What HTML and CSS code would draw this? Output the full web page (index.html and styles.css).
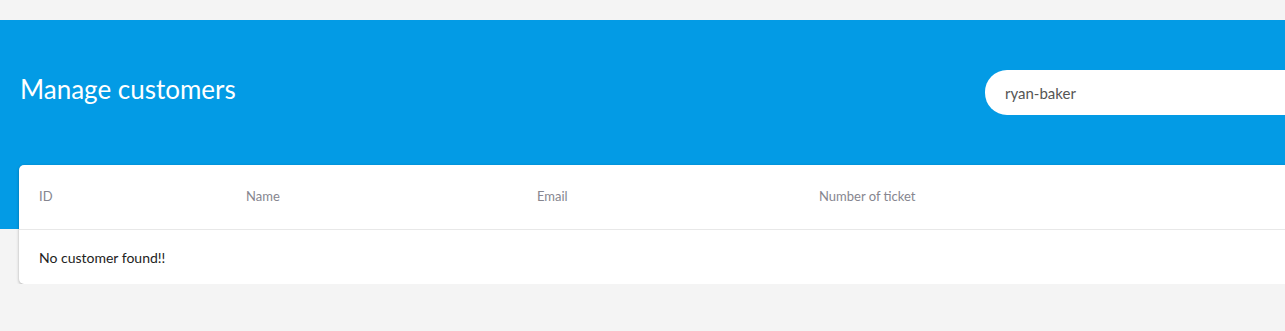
FILE: index.html
```html
<!DOCTYPE html>
<html lang="en">
<head>
    <meta charset="UTF-8">
    <meta name="viewport" content="width=device-width, initial-scale=1.0">
    <title>Manage customers</title>
    <link rel="stylesheet" href="styles.css">
</head>
<body>
    <div class="page">
        <div class="banner">
            <h1 class="banner-title">Manage customers</h1>
            <input class="search" type="text" value="ryan-baker">
        </div>
        <div class="card">
            <div class="table-head">
                <div class="col">ID</div>
                <div class="col">Name</div>
                <div class="col">Email</div>
                <div class="col">Number of ticket</div>
            </div>
            <div class="table-row">No customer found!!</div>
        </div>
    </div>
</body>
</html>
```

FILE: styles.css
```css
html, body {
    margin: 0;
    background-color: #f4f4f4;
    font-family: 'Lato', 'Open Sans', sans-serif;
    overflow: hidden;
}

.page {
    width: 1440px;
    padding-top: 20px;
}

.banner {
    height: 209px;
    box-sizing: border-box;
    background-color: #039be5;
    display: flex;
    justify-content: space-between;
    align-items: flex-start;
    padding: 50px 0 0 20px;
}

.banner-title {
    margin: 0;
    margin-top: 1px;
    font-size: 26px;
    font-weight: 400;
    color: #fff;
    line-height: 36px;
}

.search {
    width: 455px;
    height: 45px;
    box-sizing: border-box;
    border: none;
    outline: none;
    border-radius: 22px 0 0 22px;
    padding: 0 20px;
    font-family: inherit;
    font-size: 15px;
    color: #555;
    background: #fff;
}

.card {
    margin: -64px 19px 0 19px;
    background: #fff;
    border-radius: 5px;
    box-shadow: 0 1px 3px rgba(0, 0, 0, 0.3);
}

.table-head {
    display: grid;
    grid-template-columns: 207px 291px 282px 1fr;
    height: 65px;
    align-items: center;
    padding: 0 20px 2px;
    border-bottom: 1px solid #e8e8e8;
    box-sizing: border-box;
}

.col {
    font-size: 13px;
    color: #86868f;
}

.table-row {
    height: 54px;
    box-sizing: border-box;
    display: flex;
    align-items: center;
    padding: 0 20px;
    font-size: 14px;
    color: #222;
}
```
